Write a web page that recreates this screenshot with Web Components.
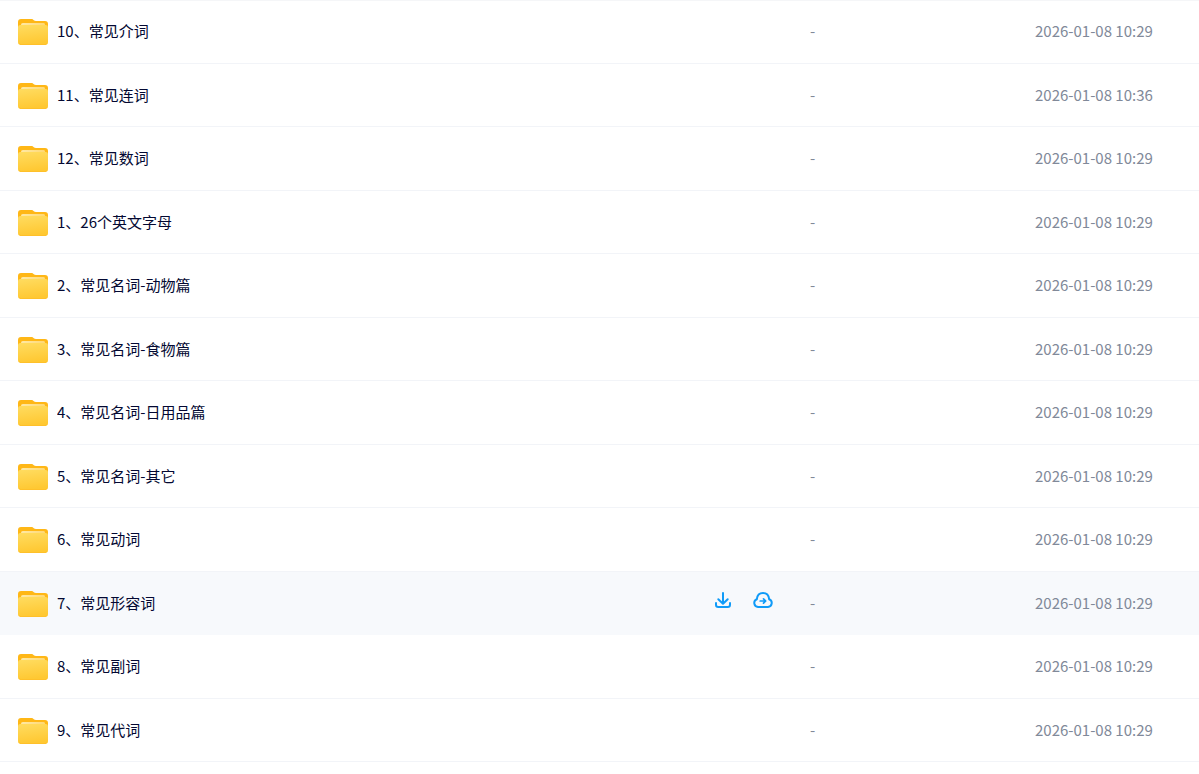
<!DOCTYPE html>
<html lang="zh-CN">
  <head>
    <meta charset="UTF-8" />
    <meta name="viewport" content="width=device-width, initial-scale=1.0" />
    <title>文件列表</title>
    <style>
      body {
        margin: 0;
        background: #fff;
        color: #030832;
        font: 15px/24px "Noto Sans CJK SC", sans-serif;
      }
    </style>
  </head>
  <body>
    <template id="folder-tmpl">
      <style>
        :host {
          display: block;
          flex: none;
          width: 30px;
          height: 26px;
        }
        svg {
          display: block;
        }
      </style>
      <svg width="30" height="26" viewBox="0 0 30 26" aria-hidden="true">
        <defs>
          <linearGradient id="front" x1="0" y1="0" x2="0.2" y2="1">
            <stop offset="0" stop-color="#ffdc60" />
            <stop offset="1" stop-color="#ffc832" />
          </linearGradient>
          <linearGradient id="paper" x1="0" y1="0" x2="1" y2="0">
            <stop offset="0" stop-color="#ffe9a6" />
            <stop offset="1" stop-color="#ffd873" />
          </linearGradient>
        </defs>
        <path fill="#ffb716" d="M0 3a3 3 0 0 1 3-3h10c1.500 0 2 .5 2.800 1.200.6.600 1.200.8 2.200.8h9a3 3 0 0 1 3 3v12H0z" />
        <path fill="url(#paper)" d="M3 6.500C3 4.800 3.500 4 5 4h20.500C26.700 4 27 4.700 27 6v3H3z" />
        <path fill="url(#front)" d="M0 8.500C0 6.800 1 6 2.500 6h25C29 6 30 6.800 30 8.500V23a3 3 0 0 1-3 3H3a3 3 0 0 1-3-3z" />
        <path fill="none" stroke="#ffc02a" d="M1 24.200c.6.900 1.200 1.300 2.200 1.300h23.600c1 0 1.700-.4 2.200-1.300" />
      </svg>
    </template>

    <template id="action-tmpl">
      <style>
        :host {
          display: block;
        }
        button {
          display: block;
          padding: 0 2px;
          border: 0;
          background: none;
          color: #109bf8;
          cursor: pointer;
        }
        svg {
          display: block;
          fill: none;
          stroke: currentColor;
          stroke-width: 2;
          stroke-linecap: round;
          stroke-linejoin: round;
        }
      </style>
      <button type="button"></button>
    </template>

    <template id="list-tmpl">
      <style>
        :host {
          display: block;
          box-shadow: inset 0 1px #f5f6f8;
        }
        table {
          width: 100%;
          table-layout: fixed;
          border-spacing: 0;
        }
        .size {
          width: 225px;
        }
        .date {
          width: 164px;
        }
        tr {
          height: 63px;
        }
        tr:nth-child(odd) {
          height: 64px;
        }
        td {
          box-sizing: border-box;
          padding: 19px 0 0;
          border-bottom: 1px solid #f2f4f8;
          color: #818999;
          vertical-align: top;
        }
        .active td {
          background: #f7f9fc;
          border-color: #f7f9fc;
        }
        .row {
          display: flex;
          align-items: flex-start;
          padding: 0 35px 0 18px;
        }
        .name {
          flex: 1;
          margin-left: 9px;
          overflow: hidden;
          color: #030832;
          text-decoration: none;
          text-overflow: ellipsis;
          white-space: nowrap;
        }
        .actions {
          display: flex;
          gap: 16px;
        }
      </style>
      <table aria-label="文件列表">
        <colgroup>
          <col />
          <col class="size" />
          <col class="date" />
        </colgroup>
        <tbody></tbody>
      </table>
    </template>

    <file-list></file-list>

    <script>
      const icons = {
        download: '<path d="M10 2v10.500M5.300 8.200 10 12.700l4.700-4.500M3 12v1.700C3 15.300 3.700 16 5.200 16h9.600c1.500 0 2.200-.7 2.200-2.300V12" />',
        save: '<path d="M5 16a4 4 0 0 1-1.200-7.700C4.200 4.400 6.600 2 10 2s5.800 2.400 6.200 6.300A4 4 0 0 1 15 16z" /><path stroke-width="1.700" d="M7.200 10h5.400M10.500 7.800l2.200 2.200-2.200 2.200" />',
      };

      const files = [
        { name: "10、常见介词", date: "2026-01-08 10:29" },
        { name: "11、常见连词", date: "2026-01-08 10:36" },
        { name: "12、常见数词", date: "2026-01-08 10:29" },
        { name: "1、26个英文字母", date: "2026-01-08 10:29" },
        { name: "2、常见名词-动物篇", date: "2026-01-08 10:29" },
        { name: "3、常见名词-食物篇", date: "2026-01-08 10:29" },
        { name: "4、常见名词-日用品篇", date: "2026-01-08 10:29" },
        { name: "5、常见名词-其它", date: "2026-01-08 10:29" },
        { name: "6、常见动词", date: "2026-01-08 10:29" },
        { name: "7、常见形容词", date: "2026-01-08 10:29", active: true },
        { name: "8、常见副词", date: "2026-01-08 10:29" },
        { name: "9、常见代词", date: "2026-01-08 10:29" },
      ];

      customElements.define("folder-icon", class extends HTMLElement {
        connectedCallback() {
          this.attachShadow({ mode: "open" });
          this.shadowRoot.append(document.getElementById("folder-tmpl").content.cloneNode(true));
        }
      });

      customElements.define("file-action", class extends HTMLElement {
        connectedCallback() {
          this.attachShadow({ mode: "open" });
          this.shadowRoot.append(document.getElementById("action-tmpl").content.cloneNode(true));
          const button = this.shadowRoot.querySelector("button");
          button.setAttribute("aria-label", this.getAttribute("label"));
          button.innerHTML = `<svg width="20" height="20" viewBox="0 0 20 20" aria-hidden="true">${icons[this.getAttribute("icon")]}</svg>`;
        }
      });

      customElements.define("file-list", class extends HTMLElement {
        connectedCallback() {
          this.attachShadow({ mode: "open" });
          this.shadowRoot.append(document.getElementById("list-tmpl").content.cloneNode(true));
          this.shadowRoot.querySelector("tbody").innerHTML = files.map((file) => this.row(file)).join("");
        }

        row({ name, date, active }) {
          const actions = `
            <div class="actions">
              <file-action icon="download" label="下载"></file-action>
              <file-action icon="save" label="保存到网盘"></file-action>
            </div>`;
          return `
            <tr class="${active ? "active" : ""}">
              <td>
                <div class="row">
                  <folder-icon></folder-icon>
                  <a class="name" href="#">${name}</a>
                  ${active ? actions : ""}
                </div>
              </td>
              <td>-</td>
              <td>${date}</td>
            </tr>`;
        }
      });
    </script>
  </body>
</html>
